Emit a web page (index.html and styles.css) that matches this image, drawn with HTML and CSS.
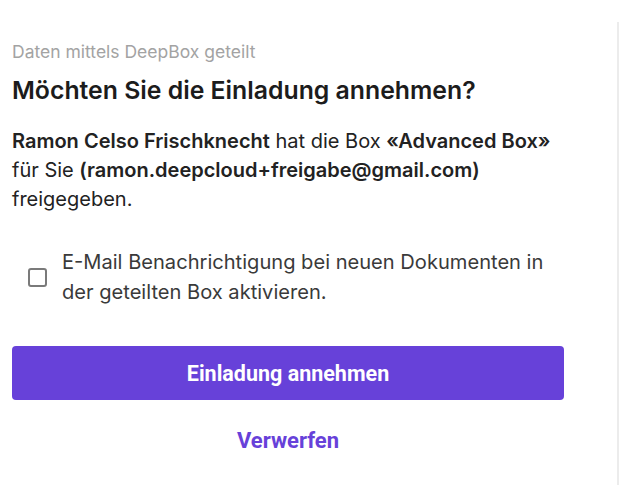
FILE: index.html
```html
<!DOCTYPE html>
<html lang="de">
<head>
<meta charset="utf-8">
<link rel="stylesheet" href="styles.css">
</head>
<body>
<div class="layout">
  <main class="panel">
    <p class="eyebrow">Daten mittels DeepBox geteilt</p>
    <h1 class="title">Möchten Sie die Einladung annehmen?</h1>
    <p class="message"><strong>Ramon Celso Frischknecht</strong> hat die Box <strong>«Advanced Box»</strong> für Sie <strong>(ramon.deepcloud+freigabe@gmail.com)</strong> freigegeben.</p>
    <label class="notify">
      <span class="box"></span>
      <span class="notify-text">E-Mail Benachrichtigung bei neuen Dokumenten in der geteilten Box aktivieren.</span>
    </label>
    <button class="primary">Einladung annehmen</button>
    <button class="link">Verwerfen</button>
  </main>
  <div class="divider"></div>
</div>
</body>
</html>
```
FILE: styles.css
```css
* { box-sizing: border-box; }
html, body { margin: 0; background: #fff; }
body { font-family: Inter, "Noto Sans", sans-serif; color: #1a1a1a; }
.layout { display: flex; height: 485px; }
.panel { width: 552px; margin-left: 12px; padding-top: 40px; }
.divider { width: 2px; background: #ececec; margin: 22px 0 0 53px; }
.eyebrow { margin: 0; font-size: 17.5px; color: #a3a3a3; line-height: 24px; }
.title { margin: 9px 0 0; font-size: 24.8px; font-weight: 600; line-height: 34px; color: #1c1c1c; }
.message { margin: 20px 0 0; font-size: 20px; line-height: 29px; color: #222; }
.message strong { font-weight: 600; }
.notify { display: flex; align-items: center; gap: 15px; margin: 33px 0 0 16px; }
.box { width: 19px; height: 19px; border: 2px solid #7a7a7a; border-radius: 3px; flex: none; }
.notify-text { font-size: 20.1px; line-height: 30px; color: #3a3a3a; max-width: 500px; }
.primary { display: block; width: 552px; height: 54px; margin-top: 39px; border: none; border-radius: 4px; background: #6741d9; color: #fff; font-family: Roboto, "Liberation Sans", sans-serif; font-weight: 700; font-size: 21.5px; }
.link { display: block; margin: 26px auto 0; border: none; background: none; color: #6741d9; font-family: Roboto, "Liberation Sans", sans-serif; font-weight: 700; font-size: 22px; line-height: 30px; padding: 0; }
```
